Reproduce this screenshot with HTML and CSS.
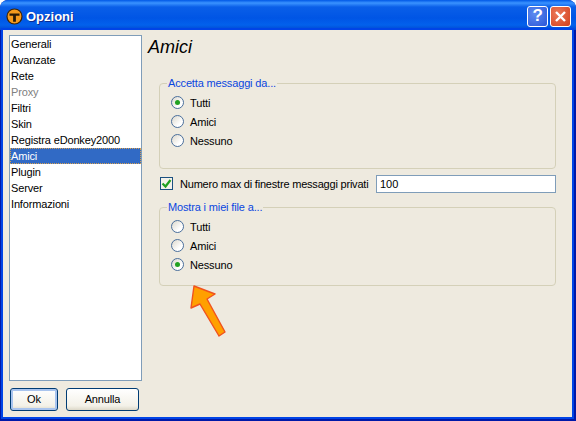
FILE: index.html
```html
<!DOCTYPE html>
<html lang="it">
<head>
<meta charset="UTF-8" />
<title>Opzioni</title>
<link rel="stylesheet" href="styles.css">
</head>
<body>

<div class="window">

  <div class="titlebar">
    <svg class="app-icon" width="17" height="17" viewBox="0 0 17 17">
      <circle cx="8.5" cy="8.5" r="7.5" fill="#f59a1c" stroke="#3a2408" stroke-width="1.2" />
      <path d="M3.5 5.5h10v2.2h-3.6v6h-2.8v-6h-3.6z" fill="#2a1a06" />
    </svg>
    <span class="title">Opzioni</span>
    <div class="title-buttons">
      <div class="tb-button tb-help">?</div>
      <div class="tb-button tb-close">
        <svg width="13" height="13" viewBox="0 0 13 13">
          <path d="M2 2l9 9M11 2l-9 9" stroke="#fff" stroke-width="2.4" />
        </svg>
      </div>
    </div>
  </div>

  <div class="client">

    <div class="sidebar">
      <ul class="list">
        <li>Generali</li>
        <li>Avanzate</li>
        <li>Rete</li>
        <li class="disabled">Proxy</li>
        <li>Filtri</li>
        <li>Skin</li>
        <li>Registra eDonkey2000</li>
        <li class="selected">Amici</li>
        <li>Plugin</li>
        <li>Server</li>
        <li>Informazioni</li>
      </ul>
      <div class="actions">
        <div class="button button-ok">Ok</div>
        <div class="button button-cancel">Annulla</div>
      </div>
    </div>

    <div class="content">
      <h1>Amici</h1>

      <fieldset class="group group-first">
        <legend>Accetta messaggi da...</legend>
        <div class="radio"><span class="dot checked"></span>Tutti</div>
        <div class="radio"><span class="dot"></span>Amici</div>
        <div class="radio"><span class="dot"></span>Nessuno</div>
      </fieldset>

      <div class="check-row">
        <span class="checkbox">
          <svg width="11" height="11" viewBox="0 0 11 11">
            <path d="M1.5 5.5l3 3 5-6.5" fill="none" stroke="#21a121" stroke-width="2.2" />
          </svg>
        </span>
        <span class="check-label">Numero max di finestre messaggi privati</span>
        <input class="max-input" type="text" value="100" />
      </div>

      <fieldset class="group group-second">
        <legend>Mostra i miei file a...</legend>
        <div class="radio"><span class="dot"></span>Tutti</div>
        <div class="radio"><span class="dot"></span>Amici</div>
        <div class="radio"><span class="dot checked"></span>Nessuno</div>
      </fieldset>
    </div>

  </div>

  <!-- annotation drawn on top of the dialog -->
  <svg class="arrow" width="50" height="62" viewBox="0 0 50 62">
    <path d="M4 6L25 14 17 19 35 52 29 56 10 24 1 28z" fill="#ffa000" stroke="#f0521e" stroke-width="1.4" stroke-linejoin="round" />
  </svg>

</div>

</body>
</html>
```

FILE: styles.css
```css
html, body {
  margin: 0;
  padding: 0;
}
body {
  width: 576px;
  height: 421px;
  overflow: hidden;
  font-family: "Liberation Sans", Arial, sans-serif;
  font-size: 11px;
  letter-spacing: -0.15px;
  color: #000;
}
.window {
  position: relative;
  display: flex;
  flex-direction: column;
  width: 576px;
  height: 421px;
  box-sizing: border-box;
  padding: 0 4px 4px 3px;
  background: #0018a8;
  border-radius: 8px 8px 0 0;
  overflow: hidden;
}
.titlebar {
  display: flex;
  align-items: center;
  height: 30px;
  margin: 0 -4px 0 -3px;
  padding: 2px 5px 0 6px;
  box-sizing: border-box;
  flex: none;
  background: linear-gradient(#0058e6 0, #3a93ff 3px, #0a5fe8 7px, #0055e5 18px, #0261ec 25px, #0048d0 30px);
}
.app-icon {
  flex: none;
}
.title {
  margin: 1px 0 0 3px;
  color: #fff;
  font-size: 13px;
  font-weight: bold;
  letter-spacing: 0;
  text-shadow: 1px 1px 0 #0a2a90;
}
.title-buttons {
  display: flex;
  gap: 2px;
  margin-left: auto;
}
.tb-button {
  display: flex;
  align-items: center;
  justify-content: center;
  width: 21px;
  height: 21px;
  box-sizing: border-box;
  border: 1px solid #fff;
  border-radius: 3px;
  color: #fff;
  font-size: 17px;
  font-weight: bold;
}
.tb-help {
  background: radial-gradient(circle at 35% 35%, #5d8cf0, #2a55d8);
}
.tb-close {
  background: radial-gradient(circle at 35% 35%, #ec7a5a, #d2401c);
}
.client {
  display: flex;
  flex: 1;
  min-height: 0;
  background: #eeeadf;
  padding: 5px 16px 6px 6px;
  box-shadow: 0 0 0 2px #0044e6;
}
.sidebar {
  display: flex;
  flex-direction: column;
  width: 133px;
  flex: none;
}
.list {
  flex: 1;
  margin: 0;
  padding: 0;
  list-style: none;
  background: #fff;
  border: 1px solid #7f9db9;
}
.list li {
  height: 16px;
  line-height: 16px;
  padding-left: 1px;
}
.list .disabled {
  color: #808080;
}
.list .selected {
  background: #316ac5;
  color: #fff;
  outline: 1px dotted #d8a050;
  outline-offset: -1px;
}
.actions {
  display: flex;
  gap: 8px;
  margin: 7px 0 0 1px;
}
.button {
  height: 23px;
  line-height: 21px;
  box-sizing: border-box;
  text-align: center;
  border: 1px solid #003c74;
  border-radius: 3px;
  background: linear-gradient(#fff, #f3f1e8 80%, #dcd8c8);
}
.button-ok {
  width: 48px;
  box-shadow: inset 0 0 0 2px #a9c4ee;
}
.button-cancel {
  width: 73px;
}
.content {
  flex: 1;
  min-width: 0;
  margin-left: 6px;
}
h1 {
  margin: 2px 0 0;
  height: 22px;
  line-height: 20px;
  font-size: 18px;
  font-weight: normal;
  font-style: italic;
  letter-spacing: 0;
}
.group {
  min-width: 0;
  margin: 17px 0 0 11px;
  padding: 0 0 0 11px;
  box-sizing: border-box;
  border: 1px solid #d4d0b8;
  border-radius: 4px;
}
.group legend {
  margin-left: -4px;
  padding: 0 1px;
  color: #0a46e0;
  line-height: 14px;
}
.group-first {
  height: 93px;
}
.group-second {
  height: 86px;
  margin-top: 7px;
}
.radio {
  display: flex;
  align-items: center;
  height: 19px;
}
.group-first .radio:first-of-type {
  margin-top: 3px;
}
.group-second .radio:first-of-type {
  margin-top: 3px;
}
.dot {
  position: relative;
  width: 13px;
  height: 13px;
  box-sizing: border-box;
  margin-right: 6px;
  border: 1px solid #4a6f9c;
  border-radius: 50%;
  background: linear-gradient(135deg, #dcd8cc, #fff 70%);
}
.dot.checked::after {
  content: "";
  position: absolute;
  left: 3px;
  top: 3px;
  width: 5px;
  height: 5px;
  border-radius: 50%;
  background: #21a121;
}
.check-row {
  display: flex;
  align-items: center;
  height: 19px;
  margin: 5px 0 0 12px;
}
.checkbox {
  display: flex;
  align-items: center;
  justify-content: center;
  flex: none;
  width: 13px;
  height: 13px;
  box-sizing: border-box;
  border: 1px solid #1c5180;
  background: #f4f2ea;
}
.check-label {
  width: 196px;
  flex: none;
  margin-left: 7px;
  letter-spacing: -0.2px;
  white-space: nowrap;
}
.max-input {
  width: 180px;
  flex: none;
  height: 18px;
  box-sizing: border-box;
  margin: 0;
  padding: 0 3px;
  border: 1px solid #7f9db9;
  font: inherit;
}
.arrow {
  position: absolute;
  left: 190px;
  top: 280px;
}
```
